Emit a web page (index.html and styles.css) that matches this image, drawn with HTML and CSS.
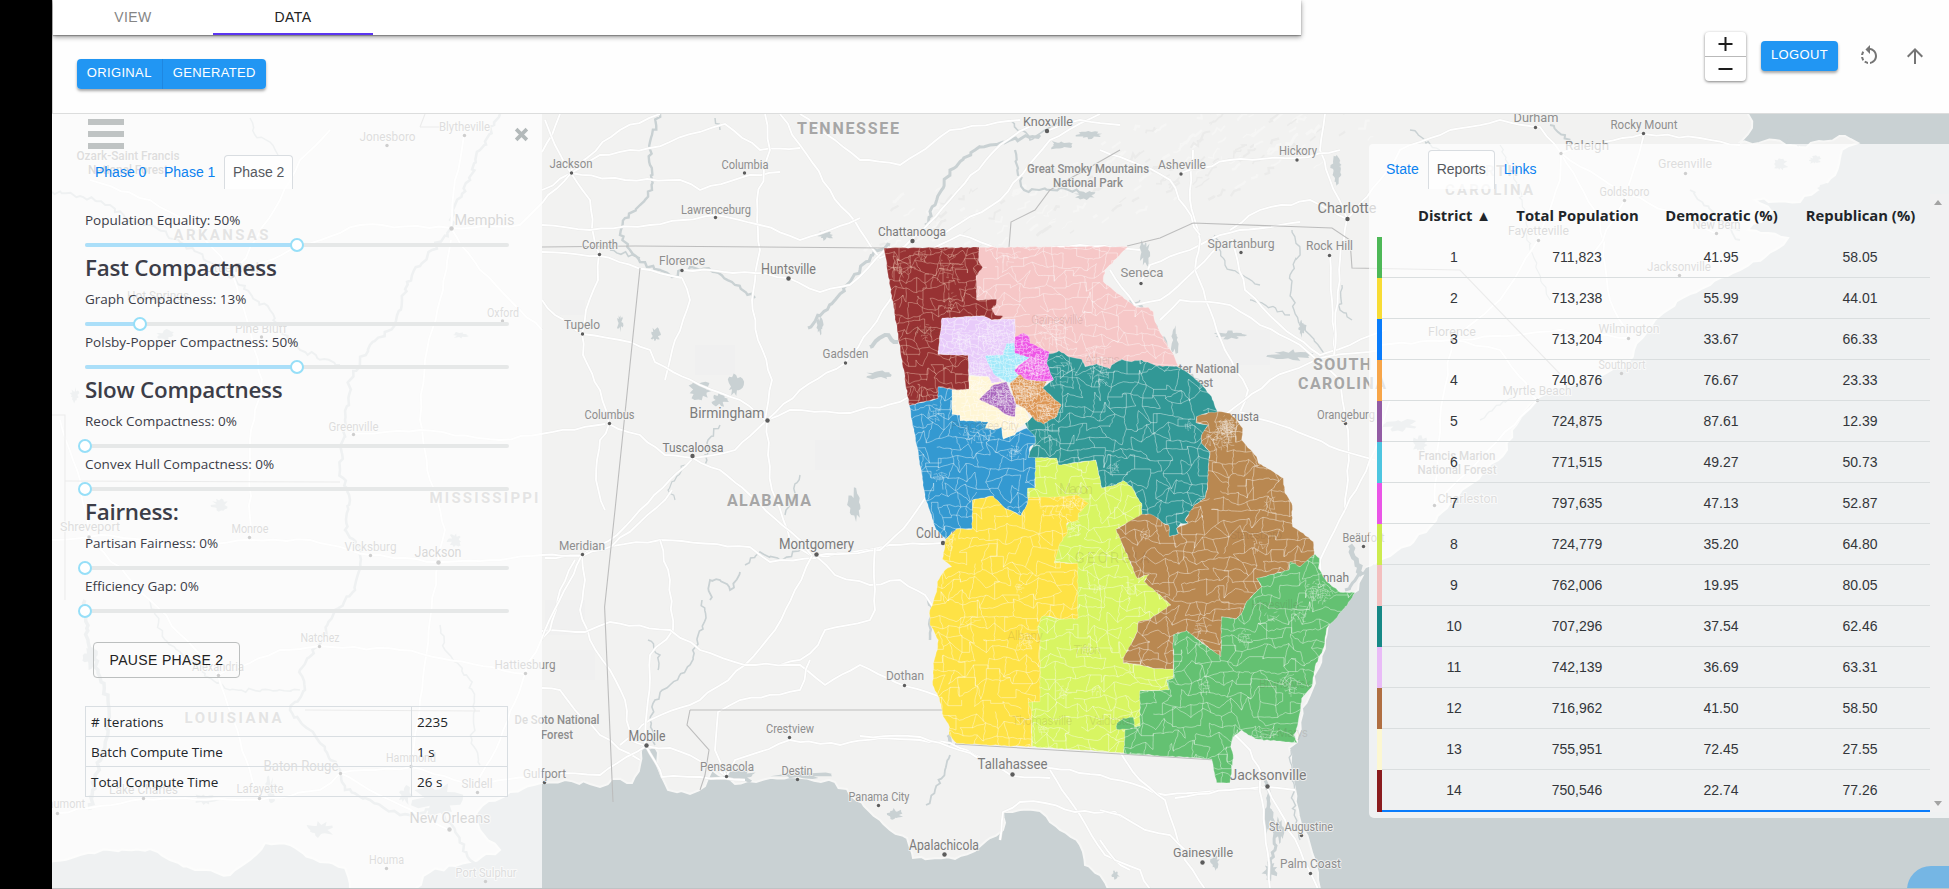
FILE: index.html
```html
<!DOCTYPE html>
<html lang="en">
<head>
<meta charset="utf-8">
<title>Districting</title>
<link rel="stylesheet" href="styles.css">
</head>
<body>
<div class="gutter"></div>
<div class="app">
  <header class="header">
    <div class="main-tabs">
      <div class="main-tab">VIEW</div>
      <div class="main-tab active">DATA</div>
    </div>
    <div class="btn-group">
      <button class="btn">ORIGINAL</button><button class="btn">GENERATED</button>
    </div>
    <div class="tools">
      <div class="zoom-ctl">
        <button aria-label="Zoom in"><svg width="15" height="14" viewBox="0 0 15 14"><path d="M7.5 0v14M.5 7h14" stroke="#1d1d1d" stroke-width="2" fill="none"/></svg></button>
        <button aria-label="Zoom out"><svg width="15" height="14" viewBox="0 0 15 14"><path d="M.5 7h14" stroke="#1d1d1d" stroke-width="2" fill="none"/></svg></button>
      </div>
      <button class="btn logout">LOGOUT</button>
      <svg class="icon" viewBox="0 0 24 24"><path d="M7.11 8.53L5.7 7.11C4.8 8.27 4.24 9.61 4.07 11h2.02c.14-.87.49-1.72 1.02-2.47zM6.09 13H4.07c.17 1.39.72 2.73 1.62 3.89l1.41-1.42c-.52-.75-.87-1.59-1.01-2.47zm1.01 5.32c1.16.9 2.51 1.44 3.9 1.61V17.9c-.87-.15-1.71-.49-2.46-1.03L7.1 18.32zM13 4.07V1L8.45 5.55 13 10V6.09c2.84.48 5 2.94 5 5.91s-2.16 5.43-5 5.91v2.02c3.95-.49 7-3.85 7-7.93s-3.05-7.44-7-7.93z"/></svg>
      <svg class="icon up" viewBox="0 0 24 24"><path d="M4 12l1.41 1.41L11 7.83V20h2V7.83l5.58 5.59L20 12l-8-8-8 8z"/></svg>
    </div>
  </header>

  <main class="stage">
    <svg class="map" viewBox="52 114 1897 775">
      <rect x="52" y="114" width="1897" height="775" fill="#f2f2f1"/>
      <g id="terrain"></g>
      <g id="water"></g>
      <g id="rivers"></g>
      <g id="roads"></g>
      <g id="borders" fill="none" stroke="#bdbdbd" stroke-width="1.1"></g>
      <g id="labels" class="labels"></g>
      <g id="districts" transform="translate(860 220) scale(.33333)"></g>
      <g id="ghosts" class="ghosts"></g>
    </svg>

    <aside class="panel-left">
      <div class="panel-top">
        <div class="burger"><i></i><i></i><i></i></div>
        <svg class="close" viewBox="0 0 14 14"><path d="M2 2l10 10M12 2L2 12" stroke="#b3b9ba" stroke-width="3.4" fill="none"/></svg>
      </div>
      <nav class="tabs"><a>Phase 0</a><a>Phase 1</a><a class="on">Phase 2</a></nav>
      <div class="controls">
        <label>Population Equality: 50%</label>
        <div class="slider"><b style="width:50%"></b><u style="left:50%"></u></div>
        <h4>Fast Compactness</h4>
        <label>Graph Compactness: 13%</label>
        <div class="slider"><b style="width:13%"></b><u style="left:13%"></u></div>
        <label>Polsby-Popper Compactness: 50%</label>
        <div class="slider"><b style="width:50%"></b><u style="left:50%"></u></div>
        <h4>Slow Compactness</h4>
        <label>Reock Compactness: 0%</label>
        <div class="slider"><u style="left:0%"></u></div>
        <label>Convex Hull Compactness: 0%</label>
        <div class="slider"><u style="left:0%"></u></div>
        <h4>Fairness:</h4>
        <label>Partisan Fairness: 0%</label>
        <div class="slider"><u style="left:0%"></u></div>
        <label>Efficiency Gap: 0%</label>
        <div class="slider"><u style="left:0%"></u></div>
      </div>
      <button class="pause">PAUSE PHASE 2</button>
      <table class="stats">
        <tr><td># Iterations</td><td>2235</td></tr>
        <tr><td>Batch Compute Time</td><td>1 s</td></tr>
        <tr><td>Total Compute Time</td><td>26 s</td></tr>
      </table>
    </aside>

    <aside class="panel-right">
      <nav class="tabs"><a>State</a><a class="on">Reports</a><a>Links</a></nav>
      <div class="report">
        <div class="head"><span>District ▲</span><span>Total Population</span><span>Democratic (%)</span><span>Republican (%)</span></div>
        <div class="row d1"><span>1</span><span>711,823</span><span>41.95</span><span>58.05</span></div>
        <div class="row d2"><span>2</span><span>713,238</span><span>55.99</span><span>44.01</span></div>
        <div class="row d3"><span>3</span><span>713,204</span><span>33.67</span><span>66.33</span></div>
        <div class="row d4"><span>4</span><span>740,876</span><span>76.67</span><span>23.33</span></div>
        <div class="row d5"><span>5</span><span>724,875</span><span>87.61</span><span>12.39</span></div>
        <div class="row d6"><span>6</span><span>771,515</span><span>49.27</span><span>50.73</span></div>
        <div class="row d7"><span>7</span><span>797,635</span><span>47.13</span><span>52.87</span></div>
        <div class="row d8"><span>8</span><span>724,779</span><span>35.20</span><span>64.80</span></div>
        <div class="row d9"><span>9</span><span>762,006</span><span>19.95</span><span>80.05</span></div>
        <div class="row d10"><span>10</span><span>707,296</span><span>37.54</span><span>62.46</span></div>
        <div class="row d11"><span>11</span><span>742,139</span><span>36.69</span><span>63.31</span></div>
        <div class="row d12"><span>12</span><span>716,962</span><span>41.50</span><span>58.50</span></div>
        <div class="row d13"><span>13</span><span>755,951</span><span>72.45</span><span>27.55</span></div>
        <div class="row d14"><span>14</span><span>750,546</span><span>22.74</span><span>77.26</span></div>
      </div>
      <div class="scroll">
        <svg width="8" height="5" viewBox="0 0 8 5"><path d="M0 5L4 0l4 5z" fill="#a3a3a3"/></svg>
        <svg width="8" height="5" viewBox="0 0 8 5"><path d="M0 0h8L4 5z" fill="#a3a3a3"/></svg>
      </div>
    </aside>
    <div class="fab"><svg width="10" height="6" viewBox="0 0 10 6"><path d="M2 1l5 5" stroke="#6b7f8c" stroke-width="1.5"/></svg></div>
  </main>
</div>
<script src="map.js"></script>
</body>
</html>
```

FILE: styles.css
```css
* { box-sizing: border-box; }
html, body { height: 100%; }
body {
  margin: 0;
  display: flex;
  overflow: hidden;
  background: #fefefe;
  font-family: "Liberation Sans", Arial, sans-serif;
  font-size: 14px;
  color: #212529;
}
button { font-family: inherit; border: 0; padding: 0; margin: 0; background: none; }
.gutter { width: 52px; background: #000; flex: none; }
.app { flex: 1; min-width: 0; display: flex; flex-direction: column; height: 889px; }

.header {
  height: 114px;
  flex: none;
  display: grid;
  grid-template-columns: 1248px 1fr;
  grid-template-rows: 35px 1fr;
  background: #fefefe;
  border-bottom: 1px solid #dcdddd;
  border-left: 1px solid #d5d5d5;
}
.main-tabs { display: flex; background: #fff; box-shadow: 0 2px 5px rgba(0,0,0,.42), 0 1px 1px rgba(0,0,0,.25); }
.main-tab {
  width: 160px;
  line-height: 34px;
  height: 35px;
  text-align: center;
  letter-spacing: .4px;
  color: #858585;
}
.main-tab.active { color: #222; border-bottom: 2px solid #5b35f0; }
.btn-group { grid-row: 2; grid-column: 1; display: flex; align-self: start; margin: 24px 0 0 24px; width: 189px; border-radius: 4px; box-shadow: 0 2px 3px rgba(0,0,0,.35); }
.btn {
  height: 30px;
  padding-bottom: 2px;
  line-height: 28px;
  background: #2196f3;
  color: #fff;
  font-size: 13px;
  letter-spacing: .35px;
}
.btn-group .btn:first-child { width: 85.5px; border-right: 1px solid #1f87e0; border-radius: 4px 0 0 4px; }
.btn-group .btn:last-child { flex: 1; border-radius: 0 4px 4px 0; }
.tools { grid-column: 2; grid-row: 1 / 3; display: flex; justify-content: flex-end; align-items: flex-start; padding: 32px 22px 0 0; }
.zoom-ctl { width: 41px; height: 49px; background: #fff; border-radius: 4px; box-shadow: 0 1px 3px rgba(0,0,0,.5); display: flex; flex-direction: column; margin-right: 15px; }
.zoom-ctl button { flex: 1; display: flex; align-items: center; justify-content: center; }
.zoom-ctl button:first-child { border-bottom: 1px solid #b9b9b9; }
.logout { width: 77px; margin: 9px 19px 0 0; border-radius: 4px; box-shadow: 0 2px 3px rgba(0,0,0,.35); }
.icon { width: 24px; height: 24px; margin-top: 12px; fill: #757575; }
.icon.up { margin-left: 22px; }

.stage { flex: 1; position: relative; overflow: hidden; border-bottom: 1px solid #bfc3c5; }
.map { display: block; width: 1897px; height: 775px; }
.labels text { font-family: Roboto, sans-serif; text-anchor: middle; fill: #8e8e8e; stroke: #f4f4f3; stroke-width: 2px; stroke-opacity: .8; paint-order: stroke; stroke-linejoin: round; }
.labels .big { fill: #7c7c7c; }
.labels .state { fill: #a6a6a6; font-weight: 700; }
.labels .park { fill: #8d8d8d; font-weight: 500; }
.ghosts text { font-family: Roboto, sans-serif; text-anchor: middle; fill: #5a4030; fill-opacity: .13; }

.panel-left {
  position: absolute;
  left: 0; top: 0;
  width: 490px; height: 775px;
  background: rgba(255,255,255,.7);
  padding: 0 33px;
}
.panel-top { display: flex; justify-content: space-between; padding: 5px 0 0 3px; height: 41px; margin-right: -20px; }
.burger { display: flex; flex-direction: column; gap: 6px; }
.burger i { width: 36px; height: 6px; background: #bfc3c3; }
.close { width: 15px; height: 15px; margin-top: 8px; }
.tabs { display: flex; }
.tabs a { color: #0b82f0; padding: 0 8px; border: 1px solid transparent; border-radius: 4px 4px 0 0; white-space: nowrap; }
.tabs .on { color: #55595e; background: rgba(255,255,255,.75); border-color: #d9dde1; border-bottom: 0; }
.panel-left .tabs { padding-left: 1px; }
.panel-left .tabs a { height: 34px; line-height: 33px; width: 69px; }
.controls { padding-top: 20px; font-family: "Open Sans", sans-serif; color: #3c3d48; }
.controls label { display: block; height: 29px; line-height: 22px; font-size: 13.5px; }
.controls h4 { margin: 0; height: 36px; line-height: 31px; font-size: 22.4px; font-weight: 600; letter-spacing: -.25px; }
.slider { position: relative; height: 14px; }
.slider::before { content: ""; position: absolute; left: 0; right: 0; top: 5px; height: 4px; border-radius: 2px; background: #e6e8e8; }
.slider b { position: absolute; left: 0; top: 5px; height: 4px; border-radius: 2px; background: #abdff9; }
.slider u { position: absolute; top: 0; width: 14px; height: 14px; margin-left: -7px; border-radius: 50%; border: 2px solid #96dff8; background: #fff; }
.pause { display: block; margin: 24px 0 0 8px; width: 147px; height: 36px; border: 1px solid #bcbfbf; border-radius: 4px; font-size: 14px; letter-spacing: .35px; color: #222; }
.stats { margin-top: 28px; width: 423px; border-collapse: collapse; table-layout: fixed; font-family: "Open Sans", sans-serif; font-size: 13.5px; }
.stats td { border: 1px solid #d9dee2; height: 30px; padding: 0 5px; line-height: 20px; }
.stats td:first-child { width: 326px; }

.panel-right {
  position: absolute;
  left: 1317px; top: 30px;
  width: 580px; height: 674px;
  background: rgba(255,255,255,.7);
  border-radius: 4px 0 0 5px;
  padding: 6px 19px 0 8px;
}
.panel-right .tabs a { height: 39px; line-height: 37px; }
.report { display: flex; flex-direction: column; }
.head, .row { display: grid; grid-template-columns: 97px 149px 139px 139px; padding-left: 24px; text-align: center; }
.head { height: 48px; line-height: 52px; padding-left: 29px; font-family: "Open Sans", sans-serif; font-weight: 700; font-size: 14.8px; white-space: nowrap; }
.row { height: 41px; line-height: 40px; border-left: 5px solid; box-shadow: inset 0 -1px #dadedf; }
.row span { color: #33363a; margin-left: -1px; }
.d1 { border-color: #4db857; } .d2 { border-color: #f8dc35; }
.d3 { border-color: #0a7cfb; } .d4 { border-color: #f7a548; }
.d5 { border-color: #925ca4; } .d6 { border-color: #4dc5e0; }
.d7 { border-color: #ea55e7; } .d8 { border-color: #cdeb4f; }
.d9 { border-color: #f3bfbf; } .d10 { border-color: #168886; }
.d11 { border-color: #e9bbf7; } .d12 { border-color: #b06f42; }
.d13 { border-color: #fcf7d1; }
.d14 { border-color: #8b1c1f; height: 42px; box-shadow: inset 0 -2px #0a7cfb; }
.scroll { position: absolute; right: 0; top: 50px; width: 19px; height: 618px; background: rgba(241,241,241,.6); display: flex; flex-direction: column; align-items: center; justify-content: space-between; padding: 6px 3px 6px 0; }
.fab { position: absolute; right: -10px; bottom: -26px; width: 52px; height: 48px; border-radius: 24px 0 0 24px; background: #75b6e4; padding: 19px 0 0 20px; }
```

FILE: map.js
```js
// Seeded generator so every load draws the same map.
let seed = 7;
const rnd = () => ((seed = (seed * 16807) % 2147483647) / 2147483647);
const jit = a => (rnd() - 0.5) * 2 * a;
const $ = id => document.getElementById(id);
const nums = s => s.trim().split(/\s+/).map(p => p.split(',').map(Number));

// Breaks each segment into small wandering steps.
function rough(pts, step, amp) {
  const out = [pts[0]];
  for (let i = 1; i < pts.length; i++) {
    const [x0, y0] = pts[i - 1], [x1, y1] = pts[i];
    const n = Math.max(1, Math.round(Math.hypot(x1 - x0, y1 - y0) / step));
    for (let k = 1; k <= n; k++) {
      const t = k / n, a = k === n ? 0 : amp;
      out.push([x0 + (x1 - x0) * t + jit(a), y0 + (y1 - y0) * t + jit(a)]);
    }
  }
  return 'M' + out.map(p => p[0].toFixed(1) + ' ' + p[1].toFixed(1)).join('L');
}

// Water bodies
const gulfWest = '40,866 80,855 110,850 150,849 170,860 195,870 230,875 250,860 265,843 290,845 320,862 345,868 350,889 350,900 40,900';
const gulf = '415,900 415,889 430,872 470,862 500,850 484,835 474,818 482,806 510,792 541,783 565,780 590,784 600,787 612,779 632,783 640,765 642,747 655,747 661,775 668,790 690,794 705,786 712,770 735,784 790,777 835,782 850,795 870,812 890,830 907,838 913,858 955,859 975,851 990,838 1003,830 1003,812 1020,810 1040,811 1060,830 1080,845 1085,865 1100,875 1108,889 1110,900';
const sea = '1323,900 1320,889 1310,845 1298,810 1293,780 1289,748 1297,742 1302,708 1312,690 1325,640 1335,610 1358,590 1367,567 1390,556 1410,545 1430,527 1447,508 1462,490 1482,474 1507,450 1512,430 1535,400 1560,387 1600,377 1628,362 1634,350 1655,320 1690,294 1740,270 1765,257 1788,238 1748,230 1772,212 1755,200 1800,202 1835,175 1842,150 1858,143 1845,136 1800,147 1775,140 1738,144 1752,128 1748,105 1960,105 1960,900';
const water = [gulfWest, gulf, sea].map(s => `<path d="${rough(nums(s + ' ' + s.split(' ')[0]), 7, 2)}Z" fill="#c9d1d3" stroke="#f7f7f6" stroke-width="2"/>`).join('');
const lakes = [[437,800,22,15],[405,795,7,9],[1337,175,4,10],[1336,165,5,9],[700,391,12,9],[735,385,8,10],[720,400,8,6],[825,235,8,5],[1290,355,20,5],[1230,335,14,4],[1302,328,4,8],[1145,252,5,14],[1175,340,4,14],[855,505,7,16],[820,325,3,9],[1090,135,12,4],[620,323,3,8],[655,335,5,7],[880,375,16,4],[1085,195,10,4],[1060,145,12,5],[205,800,12,6],[270,790,6,12],[320,830,14,8],[90,658,8,10],[1400,425,16,6],[1420,445,8,8],[800,775,28,4],[740,776,18,6],[895,815,8,6],[1280,830,5,14],[1215,862,4,8],[1268,815,4,22],[1270,870,7,10],[1115,875,4,4],[1800,140,12,6],[1825,190,7,6],[1815,160,6,4],[1780,165,7,6],[220,505,8,6],[455,540,7,6],[460,335,8,3],[75,395,5,7],[165,335,10,5]];
$('water').innerHTML = water + lakes.map(([x, y, a, b]) => {
  const p = [];
  for (let i = 0; i < 22; i++) {
    const t = i / 22 * 6.283, r = 0.45 + rnd() * 0.8;
    p.push((x + Math.cos(t) * a * r).toFixed(1) + ',' + (y + Math.sin(t) * b * r).toFixed(1));
  }
  return `<polygon points="${p.join(' ')}" fill="#c9d1d3"/>`;
}).join('');

// Hill shading along the mountains
let hills = '';
for (let i = 0; i < 170; i++) {
  const t = rnd(), x = 900 + t * 440 + jit(60), y = 250 - t * 130 + jit(40), l = 4 + rnd() * 10;
  hills += `<path d="${rough([[x, y], [x + l, y - l * 0.7]], 4, 3)}" stroke="${rnd() > 0.5 ? '#ebebea' : '#f6f6f5'}" stroke-width="${(1 + rnd() * 2).toFixed(1)}" fill="none"/>`;
}
[[695,345,40,30],[545,600,40,35],[560,650,35,30],[840,430,40,40],[980,830,55,35],[1210,330,60,35],[815,440,40,30],[560,300,25,15]].forEach(([x, y, w, h]) => {
  hills += `<rect x="${x}" y="${y}" width="${w}" height="${h}" fill="#efefef" opacity=".7"/>`;
});
$('terrain').innerHTML = hills;

// Rivers
const rivers = [
  ['500,114 480,150 470,180 455,205 451,228 432,250 412,275 402,300 395,325 370,345 350,380 345,420 340,470 350,500 345,530 362,550 355,590 335,610 322,640 300,670 305,690 290,710 310,730 325,750 340,770 345,790 370,800 400,815 440,810 455,830 470,860 500,889', 2.6],
  ['660,114 652,135 650,165 652,190 640,205 625,218 620,235 630,250 640,262 660,270 672,277 690,267 715,272 735,285 755,298', 2.4],
  ['808,328 835,300 860,270 875,250 890,245', 3],
  ['925,225 935,205 950,170 975,150 990,145 1010,140 1040,135', 3],
  ['1015,150 1018,175 1024,190 1060,188 1090,195', 2.2],
  ['870,347 885,335 898,342', 4],
  ['805,548 780,560 760,552 745,565', 1.6],
  ['740,572 730,590 720,580 710,580 710,600', 1.8],
  ['702,600 706,618 697,640 690,665 670,685 655,700 650,720 655,745', 1.6],
  ['648,640 660,655 658,670', 1.5], ['800,475 792,500 785,515', 1.5], ['705,465 708,440 720,425', 1.5],
  ['675,500 668,490 685,465', 1.2], ['720,130 715,118', 1.5], ['926,805 935,790 945,770 950,755', 1.8],
  ['52,192 80,196 110,205 125,218 150,225 185,245 215,265 240,285 270,310 280,330 300,350 340,365', 2],
  ['250,118 255,135 270,142 278,155', 1.5], ['85,600 88,640 98,670 108,700 106,740 95,780 90,810', 3.5],
  ['150,600 165,640 200,670 230,690 270,690 300,690', 1.6], ['440,625 445,650 470,680 475,710 472,740 480,765', 1.6],
  ['610,250 640,258', 1.6], ['928,600 932,615 930,640', 2.5], ['948,735 950,745', 3.5],
  ['1130,300 1150,315 1175,365 1205,385', 2.5], ['1110,345 1125,310 1140,300', 1.4],
  ['1292,230 1300,250 1290,275 1294,310 1310,335 1325,355', 1.4], ['1215,235 1225,265 1260,285', 1.3],
  ['1342,285 1340,310 1352,320', 1.4], ['1250,300 1290,315', 1.3], ['1350,545 1357,565 1362,575', 5],
  ['1345,590 1375,565', 3], ['1265,780 1270,810 1275,850 1268,880', 3], ['1291,750 1293,800 1300,840', 1.4],
  ['1010,120 1030,140 1060,120', 1.6], ['1480,420 1500,405 1515,395', 1.4], ['1500,145 1520,190 1530,250 1550,300', 1.2],
  ['1690,190 1715,215 1740,240', 1.8], ['1740,230 1720,222', 2.4], ['1550,125 1565,135 1570,145', 2], ['1410,130 1440,150', 1.4]
];
$('rivers').innerHTML = rivers.map(([s, w]) => `<path d="${rough(nums(s), 4, 2.2)}" fill="none" stroke="#c9d1d3" stroke-width="${w}"/>`).join('');

// Roads
const roads = [
  '542,190 571,173 600,155 650,148 700,132 725,124 760,150 800,148', '571,173 625,180 680,180 700,190 750,175 780,172',
  '571,173 590,200 592,228 599,254 598,280 586,310 582,334', '765,114 770,150 757,200 760,250 752,300 758,340 772,380 765,420',
  '780,114 800,145 830,190 860,230 880,258 905,246 950,200 1000,145 1040,120', '542,225 590,230 650,225 716,215 760,225 800,240 830,230 860,218',
  '542,252 600,256 650,270 682,278', '682,278 690,300 675,340 665,380', '682,270 755,273 788,278 820,292 850,285 885,250',
  '582,334 620,340 650,350 655,362 700,385 740,400 765,420', '582,334 583,355 600,390 609,424 600,440 596,480 605,510',
  '542,300 555,315 582,334', '767,420 790,410 850,413 900,402 912,395', '767,420 800,390 845,363 870,330 890,300 905,262',
  '767,420 735,450 693,458 640,510 617,535 582,555 545,558', '609,424 640,435 665,455 693,458', '767,420 768,455 772,490 790,540 812,556',
  '693,458 720,470 750,495 800,540 812,556', '542,555 582,556 612,546 660,540 750,547 770,562 816,558', '816,556 850,553 890,545 943,543',
  '816,556 880,550 910,520 930,490', '812,556 795,590 775,630 745,665 700,700 650,720 620,745', '816,556 835,575 870,585 900,580 925,595 935,610',
  '875,548 875,610 870,620 825,630 818,645 800,660 780,665', '582,555 585,580 580,610 590,640 610,670 625,700 630,740 646,746',
  '612,546 665,500 672,490', '660,540 670,580 673,630 650,655 648,700 645,745', '542,631 585,632 610,622 670,630 700,650 745,665 800,665 825,685 860,665 905,686 938,696',
  '575,560 560,590 550,630 541,640', '542,688 560,690 575,710 600,735 640,760', '646,746 670,748 710,765 726,776 735,760 790,740 840,745 880,738 920,740 950,743 975,755 1012,776 1050,778',
  '541,772 600,775 646,746', '646,746 660,770 662,777 700,777 745,780', '726,776 715,750 718,712 740,700 800,690 810,660',
  '860,736 920,737 950,747 1000,765 1050,768 1100,775 1165,795 1267,787', '1050,770 1062,790 1080,815 1105,855 1130,870',
  '1000,840 1003,812 1020,802 1045,803 1075,812 1115,812 1130,820', '1120,752 1140,780 1165,800 1175,830 1185,860 1205,889',
  '1100,810 1120,815 1145,830 1170,835 1185,850', '1100,840 1115,860 1140,870 1150,889', '1262,787 1230,790 1175,798',
  '1267,787 1285,820 1300,850 1318,889', '1260,780 1262,800 1265,830 1270,889', '1267,787 1295,790', '1235,735 1250,750 1262,775',
  '542,152 552,135 560,114', '571,173 555,145 545,120', '571,170 620,130 660,114', '800,114 860,160 900,165 950,130 1020,120',
  '930,250 960,235 1000,250 1080,245 1140,250', '942,235 1000,200 1050,140 1100,114', '1140,283 1150,265 1190,250 1220,235 1240,230 1300,222',
  '1110,270 1135,305 1160,300 1195,270 1200,240 1190,200 1193,150', '1195,270 1220,245 1232,240 1245,290 1280,325 1320,355 1350,345 1385,330',
  '1195,270 1210,310 1225,350 1248,390 1240,412', '1160,320 1180,300 1230,305 1260,325 1300,345 1340,380 1348,430 1348,480 1345,510',
  '1240,412 1280,425 1350,453 1375,460', '1225,415 1270,380 1320,358 1380,350', '1345,510 1320,560 1318,600', '1345,510 1375,450 1390,400',
  '1330,255 1332,300 1335,355', '1347,219 1340,260 1334,355', '1347,219 1380,180 1400,150 1450,130', '1347,219 1330,180 1320,150 1325,114',
  '1200,235 1170,180 1140,165 1100,150', '1347,219 1310,200 1260,210 1230,230', '1047,131 1080,120 1120,125', '1181,173 1230,160 1297,158 1340,150',
  '52,540 100,535 180,545 250,540 310,540 370,555 438,562 500,560 542,555', '438,562 445,530 430,480 420,420 425,360 440,300 451,240',
  '451,228 480,270 520,310 542,330', '451,228 520,225 571,173', '233,276 290,250 360,225 451,228', '233,276 200,230 150,200 90,180',
  '233,276 250,330 262,380 250,440 250,540', '89,537 80,480 60,420', '340,773 320,790 260,800 143,799 57,813', '340,773 411,767 477,785 541,775',
  '411,767 420,700 430,620 438,562', '260,800 240,740 218,675 150,600 89,537', '477,785 500,740 525,673 545,630 582,555', '340,773 390,800 449,830',
  '233,276 280,200 300,160 330,130', '451,228 455,180 464,135', '319,646 400,650 525,674', '218,675 280,650 319,646', '350,434 420,430 500,440 605,424',
  '1561,153 1600,220 1610,300 1629,338', '1538,240 1560,180 1561,153', '1538,240 1500,300 1452,340 1440,420 1435,505', '1452,340 1380,345', '1629,338 1560,330 1452,340',
  '1450,130 1500,120 1540,127 1561,153 1620,190 1717,234', '1561,153 1644,134 1700,138 1740,145', '1644,134 1625,200 1590,260', '1537,400 1500,350 1452,340', '1435,505 1537,400'
];
$('roads').innerHTML = roads.map(s => {
  const d = rough(nums(s), 11, 1.3);
  return `<path d="${d}" fill="none" stroke="#ebebea" stroke-width="2.8"/><path d="${d}" fill="none" stroke="#fff" stroke-width="1.8"/>`;
}).join('');
$('borders').innerHTML = [
  '542,247 635,246 885,248', '640,268 615,510 604.6,607 613,802', '690,710 943,710', '690,710 687,725 709,750 705,775 700,790',
  '955,744 1120,754 1215,760', '1127,246 1160,238 1193,223 1332,228 1350,240 1352,268 1460,270 1560,374', '1009,247 1011,222 1035,210 1050,190 1120,150',
  '52,415 65,415 65,600', '65,481 340,482', '305,710 480,711', '420,127 425,114', '420,127 440,127'
].map(s => `<polyline points="${s}"/>`).join('');

// Place labels: name, x, y, width, size, class, dot x, dot y
const P = `TENNESSEE,848,128,102,16,state|Knoxville,1048,121,50,13.5,big,1047,131|Great Smoky Mountains,1088,168,122,12.5,park|National Park,1088,182,70,12.5,park|Jackson,571,163,43,12.5,,571.5,173
Columbia,745,164,47,12.5,,744.5,173|Lawrenceburg,716,209,70,12.5,,715.5,217.5|Chattanooga,912,231,68,13.5,big,912.5,241|Corinth,600,245,36,12,,599.5,254.5|Florence,682,260,46,12.5,,682,270.5
Huntsville,788.5,268.5,55,14,big,788.5,278.5|Tupelo,582,324,36,12.5,,582.5,334|Gadsden,845.5,353.5,46,12.5,,845.5,363|Columbus,609.5,414,50,12.5,,609.5,423.5|Birmingham,727,412.5,75,15,big,767.5,420.5
Tuscaloosa,693,447,61,13.5,big,692.5,456|ALABAMA,769,500.5,84,16,state|Meridian,582,545,46,13,,582.5,554.5|Montgomery,816.5,544,75,15,big,816.5,554.5|Columbus,943.5,533,55,14,big,943,543
Dothan,905,675.5,38,13,,904.5,685.5|De Soto National,557,719.5,85,12.5,park|Forest,557,734,32,12.5,park|Mobile,647,735.5,37,14,big,646.5,745.5|Gulfport,544.5,773,43,13,,544.5,782.5
Crestview,790,728.5,48,12.5,,789.5,737.5|Pensacola,727,766.5,54,13,,726.5,776.5|Destin,797,770,31,12.5,,797.5,779.5|Panama City,879,796.5,61,12.5,,878.5,805.5|Apalachicola,944,844.5,70,14,big,944.5,854.5
Tallahassee,1012.5,763.5,70,14.5,big,1012.5,774.5|Jacksonville,1268,774.5,77,15,big,1267.5,786.5|St. Augustine,1301,826,64,12.5,,1301.5,835.5|Palm Coast,1310.5,863.5,61,12.5,,1310.5,873.5|Gainesville,1203,852.5,60,13.5,big,1202.5,862.5
Beäufort,1363.5,537.5,42,12.5,,1363.5,546.5|Savannah,1323,577,52,13.5,big|Orangeburg,1346,415,58,12,,1345.5,423.5|SOUTH,1342,364.5,58,16,state|CAROLINA,1342,383.5,88,16,state
Augusta,1238,416.5,42,13.5,big|Sumter National,1197,368,84,12.5,park|Forest,1197,382.5,32,12.5,park|Seneca,1142,272.5,43,13.5,,1141,283.5|Spartanburg,1241,243,67,12.5,,1241,252.5
Rock Hill,1329.5,245.5,47,12.5,,1329.5,255.5|Charlotte,1347,208,59,14.5,big,1347.5,219|Hickory,1298,150.5,38,12,,1297,160|Asheville,1182,164,48,12.5,,1181,174|Durham,1536,117,45,13,,1535.5,127.5
Rocky Mount,1644,124,67,12.5,,1643.5,133.5|Raleigh,1587,145,44,13.5,,1561,153.5|Greenville,1685,163.5,54,12.5,,1685.5,173.5|NORTH,1489,170.5,58,15,state|CAROLINA,1489,190,88,15,state
Goldsboro,1624.5,192,50,12,,1624.5,200.5|Fayetteville,1538.5,230.5,61,12.5,,1538.5,240.5|New Bern,1716.5,225,48,12,,1716.5,233.5|Jacksonville,1679,266,64,12.5,,1679.5,275.5|Florence,1452,331.5,48,12.5,,1452,340
Wilmington,1629,328.5,61,12.5,,1628.5,338.5|Southport,1622,365,47,12,,1621.5,373.5|Myrtle Beach,1537,390.5,69,12.5,,1537.5,400.5|Francis Marion,1457,455,77,12.5,park|National Forest,1457,469.5,79,12.5,park
Charleston,1467.5,498.5,60,13,,1434.5,505.5|Jonesboro,387.5,136,56,12.5,,387,145.5|Blytheville,464.5,127,51,12,,464.5,135.5|Ozark-Saint Francis,128,155.5,103,12,park|National Forest,128,170,80,12,park
ARKANSAS,221,234.5,95,15,state|Memphis,484.5,220,60,15,big,451.5,228.5|Little Rock,233,267,58,13.5,,233,276|Hot Springs,158,295,62,12.5,|Oxford,503,312.5,32,12,,502.5,321
Pine Bluff,261,328.5,52,12.5,,261.5,337|Greenville,353.5,426,50,12.5,,353.5,434.5|MISSISSIPPI,484,498,109,15,state|Shreveport,90,526.5,60,12.5,,89,537|Monroe,250,529,37,12,,249.5,537.5
Vicksburg,370.5,546,52,12.5,,370.5,555.5|Jackson,438,551.5,47,14,big,438.5,562.5|Natchez,320,638,39,12,,319.5,646.5|Hattiesburg,525,664,61,12.5,,525.5,673.5|Alexandria,218,666.5,52,12,,218.5,675.5
LOUISIANA,233,717.5,97,15,state|Baton Rouge,301,765.5,75,14,,340.5,773.5|Hammond,411,758,50,12,,411,766.5|Lake Charles,143.5,789,69,12.5,,143.5,798.5|Lafayette,260,788.5,47,12.5,,259.5,798.5
Slidell,477,783.5,31,12,,477.5,792.5|New Orleans,450,817.5,81,15,big,449.5,829.5|Houma,386.5,860,35,12,,386.5,868.5|Port Sulphur,486,873,61,12,,485.5,881.5|Beaumont,60,804,50,12,,57.5,813.5`;
$('labels').innerHTML = P.split(/[|\n]/).map(r => {
  const [t, x, y, w, s, c, dx, dy] = r.split(',');
  const fit = c === 'state' ? 'spacing' : 'spacingAndGlyphs';
  return (dx ? `<circle cx="${dx}" cy="${dy}" r="${c ? 2.2 : 1.7}" fill="#5c5c5c"/>` : '') +
    `<text class="${c || ''}" x="${x}" y="${+y + s * 0.36}" font-size="${s}" textLength="${w}" lengthAdjust="${fit}">${t}</text>`;
}).join('');
$('ghosts').innerHTML = 'GEORGIA,1112,558,75,15|Macon,1076,489,34,14|Albany,1025,635,36,13|Tifton,1087,650,27,12|Thomasville,1042,721,60,12|Valdosta,1110,721,42,12|Statesboro,1256,535,52,12|Hinesville,1275,605,48,12|Brunswick,1285,684,52,12|St. Marys,1285,733,46,12|Peachtree City,985,426,68,12|Gainesville,1057,320,52,12|Athens,1102,359,36,13|Rome,925,331,28,12'
  .split('|').map(r => { const [t, x, y, w, s] = r.split(','); return `<text x="${x}" y="${+y + s * 0.36}" font-size="${s}" textLength="${w}">${t}</text>`; }).join('');

// Districts: fill, precinct cell size, outline, dense urban spots [x, y, rx, ry, cell]
const D = [
  ['#f6c7c7', 30, '357,82 803,80 770,115 735,150 730,185 760,210 800,240 830,262 865,262 880,275 885,305 905,345 935,395 955,437 925,440 890,445 845,430 785,430 750,447 710,440 675,438 650,425 595,400 560,410 520,380 465,350 465,297 400,300 350,280 348,168', [[575,335,50,50,11],[440,110,40,25,14],[700,400,60,30,16]]],
  ['#329896', 33, '560,400 580,400 597,392 625,410 665,418 675,440 710,432 750,447 755,435 785,418 815,425 845,420 890,438 950,440 985,460 1030,500 1055,530 1070,570 1075,585 1045,578 1010,590 1008,608 1045,615 1025,645 1025,670 1050,695 1045,740 1043,800 1035,835 1003,855 990,880 975,900 985,910 962,910 950,925 955,942 928,950 926,915 910,910 890,893 845,885 845,850 830,830 815,800 790,782 760,797 725,805 707,720 595,735 590,715 505,713 525,660 495,610 540,570 550,500 580,480 560,440', [[715,460,40,35,9],[758,745,22,22,7],[600,450,50,50,14],[560,640,40,50,16],[980,610,14,20,8]]],
  ['#3499d1', 30, '148,556 234,535 234,500 276,508 276,583 300,585 300,600 370,600 385,605 425,618 430,655 465,640 500,625 525,650 525,672 510,680 505,713 527,713 525,805 503,805 503,850 483,887 460,875 435,865 420,850 398,828 338,840 336,928 290,927 275,935 270,945 258,957 240,940 225,920 205,860 195,830 185,760', [[222,575,26,26,8],[350,640,70,35,11],[460,695,26,22,7],[235,765,22,22,9]]],
  ['#d8f562', 30, '527,713 590,715 595,735 707,720 725,805 760,797 790,782 815,800 830,830 845,850 845,885 768,928 832,1075 868,1063 852,1085 885,1110 933,1155 865,1200 835,1205 832,1235 815,1270 790,1315 790,1330 845,1335 880,1345 940,1348 940,1375 920,1380 928,1410 840,1412 840,1518 795,1530 792,1598 515,1580 515,1480 505,1470 505,1445 535,1445 530,1215 545,1185 600,1197 650,1190 650,1030 583,1028 600,940 650,880 600,840 503,833 503,805 525,805', [[640,922,22,34,7],[605,1418,22,20,7],[545,1525,16,16,7],[705,1410,14,14,7],[705,1100,26,26,11],[805,1105,30,26,11],[680,1290,18,24,9]]],
  ['#fee245', 33, '338,840 370,835 398,828 420,850 435,865 460,875 483,887 503,850 505,833 570,832 650,825 686,850 655,880 655,900 620,910 622,940 600,970 583,1028 653,1030 653,1197 600,1197 570,1188 545,1190 532,1222 540,1250 540,1445 505,1447 515,1480 515,1581 290,1570 268,1545 268,1520 250,1490 238,1435 218,1395 220,1330 232,1290 235,1260 210,1215 208,1180 230,1115 232,1085 255,1050 275,1040 247,1017 258,957 270,945 290,927 336,928', [[635,845,45,26,8],[268,965,20,28,6],[495,1265,32,24,7],[475,1102,14,16,6],[320,1210,30,26,14],[590,860,60,34,16]]],
  ['#b98851', 30, '768,928 845,883 870,882 890,893 910,910 926,915 928,950 955,942 950,925 985,910 975,900 1003,855 1035,835 1043,800 1045,740 1050,695 1025,670 1025,645 1045,615 1008,608 1010,590 1045,578 1085,575 1110,580 1130,600 1148,625 1145,660 1190,710 1195,730 1240,755 1270,775 1275,820 1295,850 1298,920 1330,940 1360,965 1362,1005 1345,1020 1320,1040 1290,1028 1287,1050 1190,1075 1205,1100 1160,1145 1145,1180 1128,1198 1085,1190 1083,1310 1035,1275 980,1232 940,1245 940,1347 880,1345 845,1335 790,1328 790,1315 815,1270 832,1235 835,1205 865,1200 933,1155 852,1085 868,1063 832,1075', [[1100,620,34,32,5],[1085,655,50,36,8],[1100,620,26,24,6],[850,945,14,16,7],[1195,975,26,20,9],[1225,855,24,20,10],[1022,1220,28,20,9]]],
  ['#64c172', 32, '1190,1075 1287,1050 1290,1025 1320,1040 1365,1003 1378,1015 1375,1045 1400,1085 1440,1117 1485,1118 1462,1155 1400,1225 1392,1280 1365,1340 1355,1400 1325,1435 1322,1465 1308,1535 1300,1545 1312,1568 1250,1563 1195,1558 1165,1545 1145,1530 1120,1550 1112,1580 1120,1615 1110,1688 1070,1688 1060,1640 1055,1617 792,1600 795,1530 840,1518 840,1412 928,1410 920,1380 940,1375 940,1245 980,1232 1035,1275 1083,1310 1085,1190 1128,1198 1145,1180 1160,1145 1205,1100', [[1375,1115,50,36,7],[1150,1255,24,30,8],[1285,1390,34,34,9],[1025,1395,26,22,8],[1235,1190,26,18,8],[1210,1535,40,22,10],[1320,1180,40,34,12]]],
  ['#64c172', 60, '768,1520 772,1508 790,1495 820,1492 825,1525 770,1528', []],
  ['#973233', 25, '72,84 357,82 355,120 368,142 348,168 350,240 410,238 408,255 395,265 405,285 430,288 420,298 395,300 375,290 350,288 300,292 246,295 243,330 234,403 325,405 327,508 300,512 276,508 234,500 234,535 200,543 148,556', [[192,335,26,30,8],[265,250,18,40,9],[265,140,40,50,14],[175,105,30,20,10],[120,130,40,50,16],[185,505,30,30,16]]],
  ['#e8cbfa', 14, '246,295 300,292 350,288 375,290 395,300 465,297 465,380 430,410 400,430 410,465 430,490 390,490 385,470 327,465 325,405 234,403 243,330', [[305,355,30,34,6],[400,350,55,50,8],[360,435,34,36,8]]],
  ['#fff6d5', 13, '276,512 327,508 327,468 385,470 395,490 430,485 465,560 490,560 510,598 490,615 470,630 465,645 430,658 425,620 400,630 375,625 385,605 300,602 300,585 276,583', [[450,600,40,30,7],[350,500,30,30,8]]],
  ['#a3e9fa', 9, '375,408 430,405 440,370 465,370 468,395 510,412 465,440 490,480 455,490 430,480 400,460', []],
  ['#ee55e6', 9, '465,350 490,340 508,350 510,370 568,395 560,430 580,480 545,485 490,478 463,450 508,412 465,400', [[525,440,50,40,5]]],
  ['#dd9654', 9, '450,490 480,463 500,480 560,485 548,505 604,555 590,590 550,612 525,600 495,565 468,552', [[500,510,46,40,5],[550,570,30,26,6]]],
  ['#a865bd', 8, '358,538 400,495 440,485 467,550 465,590 435,582 405,560', [[430,530,40,32,5]]]
];

// Irregular cells: rows are offset and sheared so that the edges do not line up.
function mesh(x0, y0, x1, y1, s, inside) {
  const nx = Math.ceil((x1 - x0) / s) + 1, ny = Math.ceil((y1 - y0) / s) + 1, g = [];
  for (let j = 0; j <= ny; j++) {
    g.push([]);
    for (let i = 0; i <= nx; i++) {
      g[j].push([x0 + i * s + jit(s * 0.48), y0 + j * s + ((i + j) % 2 ? s * 0.2 : -s * 0.2) + jit(s * 0.45)]);
    }
  }
  let d = '';
  const edge = (a, b) => {
    if (inside && !inside(a)) return;
    if (rnd() < 0.12) return;
    d += s < 12 ? `M${a[0].toFixed(0)} ${a[1].toFixed(0)}L${b[0].toFixed(0)} ${b[1].toFixed(0)}`
      : rnd() < 0.12 ? `M${a[0].toFixed(0)} ${a[1].toFixed(0)}H${b[0].toFixed(0)}V${b[1].toFixed(0)}` : rough([a, b], 9, 2.4);
  };
  for (let j = 0; j < ny; j++) for (let i = 0; i < nx; i++) {
    edge(g[j][i], g[j][i + 1]);
    if ((i + j) % 2 === 0 || rnd() < 0.25) edge(g[j][i], g[j + 1][i]);
  }
  return d;
}

$('districts').innerHTML = D.map(([fill, s, pts, spots], n) => {
  const p = nums(pts), xs = p.map(a => a[0]), ys = p.map(a => a[1]);
  const outline = rough([...p, p[0]], 9, 1.6) + 'Z';
  const lines = mesh(Math.min(...xs) - s, Math.min(...ys) - s, Math.max(...xs) + s, Math.max(...ys) + s, s);
  let fine = '';
  spots.forEach(([x, y, rx, ry, c]) => {
    fine += mesh(x - rx, y - ry, x + rx, y + ry, c, a => ((a[0] - x) / rx) ** 2 + ((a[1] - y) / ry) ** 2 < 0.15 + rnd() * 0.85);
  });
  const ink = fill === '#973233' ? '#f3d0ba' : '#fff';
  return `<clipPath id="c${n}"><path d="${outline}"/></clipPath><path d="${outline}" fill="${fill}" stroke="#fff" stroke-opacity=".35" stroke-width="2"/>` +
    `<g clip-path="url(#c${n})" fill="none" stroke="${ink}"><path d="${lines}" stroke-opacity=".48" stroke-width="2.5"/><path d="${fine}" stroke-opacity=".5" stroke-width="1.8"/></g>`;
}).join('');
```
